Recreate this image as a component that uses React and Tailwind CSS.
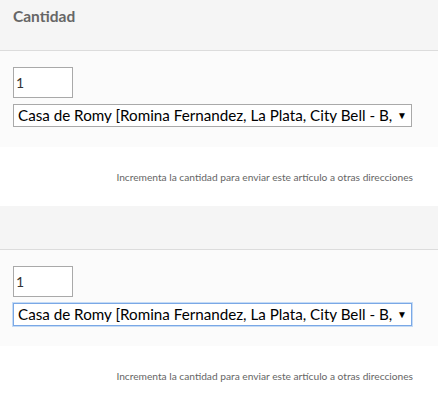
import React from 'react';

const address = 'Casa de Romy [Romina Fernandez, La Plata, City Bell - B, Calle 5 1234]';

const QuantityBlock = ({ title, focused, headerHeight }) => {
  return (
    <div>
      <div className={`${headerHeight} bg-[#f5f5f5] border-b border-[#dcdcdc] px-[13px] pt-[6px]`}>
        {title && <h3 className="text-[15.5px] font-bold text-[#666] leading-5">{title}</h3>}
      </div>

      <div className="bg-[#fbfbfb] px-[13px] pt-[16px] pb-[20px]">
        <input
          type="text"
          defaultValue="1"
          className="block w-[60px] h-[31px] border border-[#a9a9a9] bg-white px-[2px] text-[14px] text-[#333] outline-none"
        />
        <div className="relative mt-[6px] w-[399px]">
          <select
            className={`block w-full h-[23px] appearance-none bg-white pl-[4px] pr-[16px] text-[15.2px] text-black leading-none outline-none border ${
              focused ? 'border-[#7aa8e6] shadow-[0_0_0_1px_#c5dbf5]' : 'border-[#a9a9a9]'
            }`}
          >
            <option>{address}</option>
          </select>
          <span className="absolute right-[5px] top-[4px] text-[10px] text-black pointer-events-none">▼</span>
        </div>
      </div>

      <div className="bg-white h-[59px] flex items-center justify-end pr-[25px] pt-[3px]">
        <p className="text-[10.2px] text-[#666]">
          Incrementa la cantidad para enviar este artículo a otras direcciones
        </p>
      </div>
    </div>
  );
};

export default function App() {
  return (
    <div className="w-[438px] h-[399px] overflow-hidden bg-white" style={{ fontFamily: 'Lato, "Open Sans", sans-serif' }}>
      <QuantityBlock title="Cantidad" headerHeight="h-[51px]" />
      <QuantityBlock focused headerHeight="h-[44px]" />
    </div>
  );
}
